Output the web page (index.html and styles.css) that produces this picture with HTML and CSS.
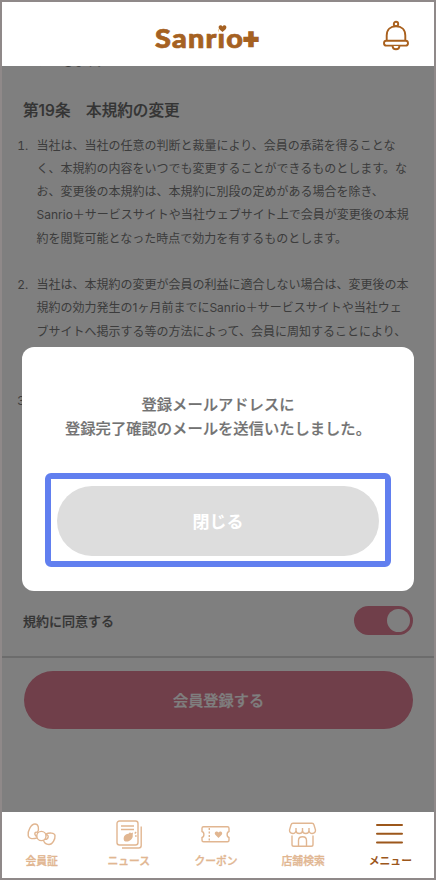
FILE: index.html
```html
<!DOCTYPE html>
<html lang="ja">
<head>
<meta charset="utf-8">
<title>Sanrio+</title>
<link rel="stylesheet" href="styles.css">
</head>
<body>
<div class="app">
  <header class="header">
    <div class="logo"><span class="logo-text">Sanrio</span><svg class="logo-heart" viewBox="0 0 9 9"><rect x=".5" width="8" height="9" fill="#fff"/><path d="M4.500 8C2.500 6.300 .6 5 .6 3.200C.6 .9 3.400 .5 4.500 2.500C5.600 .5 8.400 .9 8.400 3.200C8.400 5 6.500 6.300 4.500 8Z"/></svg><span class="logo-plus">+</span></div>
    <svg class="bell" viewBox="0 0 28 32"><circle cx="14" cy="4" r="2.200"/><path d="M4.700 21.500V15.500C4.700 9.500 8.500 6.200 14 6.200S23.300 9.500 23.300 15.500V21.500"/><rect x="2" y="20.800" width="24" height="4.800" rx="2.400"/><path d="M10.600 26C10.600 30.400 17.400 30.400 17.400 26"/></svg>
  </header>
  <main class="content">
    <div class="terms">
      <p class="previous">たとします。</p>
      <h2>第19条　本規約の変更</h2>
      <ol>
        <li><span>当社は、当社の任意の判断と裁量により、会員の承諾を得ることな</span><span>く、本規約の内容をいつでも変更することができるものとします。な</span><span>お、変更後の本規約は、本規約に別段の定めがある場合を除き、</span><span>Sanrio＋サービスサイトや当社ウェブサイト上で会員が変更後の本規</span><span>約を閲覧可能となった時点で効力を有するものとします。</span></li>
        <li><span>当社は、本規約の変更が会員の利益に適合しない場合は、変更後の本</span><span>規約の効力発生の1ヶ月前までにSanrio＋サービスサイトや当社ウェ</span><span>ブサイトへ掲示する等の方法によって、会員に周知することにより、</span></li>
        <li>&nbsp;</li>
      </ol>
    </div>
    <div class="agree"><span>規約に同意する</span><span class="toggle"><span class="knob"></span></span></div>
    <div class="submit-area"><button class="submit">会員登録する</button></div>
    <div class="overlay">
      <section class="dialog">
        <p>登録メールアドレスに<br>登録完了確認のメールを送信いたしました。</p>
        <div class="focus"><button class="close">閉じる</button></div>
      </section>
    </div>
  </main>
  <nav class="nav">
    <a><svg viewBox="0 0 32 30"><path d="M11.400 12.600C13.500 9 12.500 4 9 4C5 4 1.500 11 2.200 15.500C2.900 19.500 7.500 19 11.300 17.800M19.800 14.200C23 12.500 28.500 12.500 29 15.500C29.400 19 26.500 24.500 23 24.500C20 24.500 18 22.500 17.500 20.200"/><circle cx="15.400" cy="16" r="4.600"/><path d="M12 12.800C8.800 10.500 7.500 14.500 10.800 16.600M19.900 14.700C23.400 14.500 22.800 19.700 18.700 19.300"/></svg><span>会員証</span></a>
    <a><svg viewBox="0 0 32 30"><rect x="4" y="1" width="21" height="24" rx="2.500"/><path d="M28.200 6.500V25.500Q28.200 28 25.700 28H9M8 6H21M8 9.500H21"/><path class="solid" d="M11.300 21C9.500 17.500 12 13.500 15.500 13.700L17 12.300L18 13.300L20 12.500L19.700 15C20.500 19 15.500 23 11.300 21Z"/><path d="M21.700 13.500L23.200 12M22 16H23.700"/></svg><span>ニュース</span></a>
    <a><svg viewBox="0 0 32 30"><path d="M3.500 6.800H27.500Q29 6.800 29 8.300V11.500C26.500 12 26.500 17 29 17.500V20.300Q29 21.800 27.500 21.800H3.500Q2 21.800 2 20.300V17.500C4.500 17 4.500 12 2 11.500V8.300Q2 6.800 3.500 6.800Z"/><path class="dash" d="M9.300 8V21"/><path class="solid" d="M18.500 18L15.300 14.800C13.500 12.300 17 10.300 18.500 12.600C20 10.300 23.500 12.300 21.700 14.800Z"/></svg><span>クーポン</span></a>
    <a><svg viewBox="0 0 32 30"><path d="M6 3.300H25Q26.500 3.300 27 5L28.500 10C28.500 14.500 22 14.500 22 10.500C22 14.500 15.500 14.500 15.500 10.500C15.500 14.500 9 14.500 9 10.500C9 14.500 2.500 14.500 2.500 10L4 5Q4.500 3.300 6 3.300ZM9 8V11M15.500 8V11M22 8V11M5 15.500V24.500Q5 26.300 6.800 26.300H24.200Q26 26.300 26 24.500V15.500M11.500 26V20.500C11.500 15.500 19.500 15.500 19.500 20.500V26"/></svg><span>店舗検索</span></a>
    <a class="current"><svg viewBox="0 0 32 30"><path d="M3 5H28M3 13.800H28M3 22.600H28"/></svg><span>メニュー</span></a>
  </nav>
</div>
</body>
</html>
```

FILE: styles.css
```css
* { box-sizing: border-box; }
body {
  margin: 0;
  font-family: Inter, "Noto Sans CJK JP", sans-serif;
  text-spacing-trim: space-all;
}
button { border: 0; font-family: inherit; }
.app {
  width: 436px;
  height: 880px;
  border: 2px solid #8f8989;
  display: flex;
  flex-direction: column;
  background: #fff;
  overflow: hidden;
}
.header {
  height: 64px;
  flex: none;
  display: flex;
  align-items: center;
  justify-content: space-between;
  padding: 0 24px 0 152.500px;
}
.logo {
  position: relative;
  display: flex;
  align-items: center;
  height: 32px;
  margin-top: 7px;
  color: #a56122;
  font-family: Lato, sans-serif;
  font-weight: 900;
  font-size: 26px;
  line-height: 32px;
  -webkit-text-stroke: .7px #a56122;
}
.logo-text { letter-spacing: 1.100px; transform: scaleX(1.110); transform-origin: left; width: 89px; }
.logo-plus { font-size: 26px; -webkit-text-stroke-width: 2.600px; }
.logo-heart {
  position: absolute;
  left: 63.500px;
  top: 2px;
  width: 9px;
  height: 9px;
  fill: #a56122;
  stroke: none;
}
.bell {
  width: 28px;
  height: 32px;
  margin-top: 3px;
  fill: #fff;
  stroke: #a9601d;
  stroke-width: 1.900;
}
.content {
  position: relative;
  height: 746px;
  flex: none;
  overflow: hidden;
  display: flex;
  flex-direction: column;
}
.terms {
  height: 520px;
  flex: none;
  overflow: hidden;
  padding: 0 20px 0 21px;
  color: #787878;
}
.previous {
  margin: -16px 0 0 15px;
  font-size: 12px;
  line-height: 23px;
}
h2 {
  margin: 26px 0 11.500px;
  font-size: 15.600px;
  line-height: 23px;
  font-weight: 500;
  -webkit-text-stroke: .2px;
  color: #686868;
}
ol {
  margin: 0;
  padding-left: 13.500px;
  font-size: 12px;
  line-height: 23.250px;
}
li { margin-bottom: 23.250px; }
li:nth-child(2) { padding-bottom: 23.250px; }
li::marker { content: counter(list-item) ".\2002\200A\200A"; }
li span { display: block; white-space: nowrap; }
.agree {
  height: 72px;
  flex: none;
  display: flex;
  align-items: center;
  justify-content: space-between;
  padding: 0 21px 2px;
  border-bottom: 2px solid #d8d8d8;
  font-size: 13px;
  font-weight: 500;
  -webkit-text-stroke: .2px;
  color: #686868;
}
.toggle {
  width: 59px;
  height: 29px;
  padding: 3px;
  border-radius: 15px;
  background: #e07e94;
  display: flex;
  justify-content: flex-end;
}
.knob { width: 23px; height: 23px; border-radius: 50%; background: #fff; }
.submit-area { padding: 13px 21px 0 22px; }
.submit {
  display: block;
  width: 100%;
  height: 58px;
  padding-bottom: 3px;
  border-radius: 29px;
  background: #e07e94;
  color: #fff;
  font-size: 15.200px;
  font-weight: 500;
  -webkit-text-stroke: .25px;
}
.overlay {
  position: absolute;
  inset: 0;
  background: rgba(0, 0, 0, .5);
  padding: 281px 20px 0;
}
.dialog {
  height: 244px;
  border-radius: 12px;
  background: #fff;
  padding: 46px 23px 0;
  text-align: center;
}
.dialog p {
  margin: 0 0 33px;
  font-size: 15.300px;
  line-height: 23.500px;
  font-weight: 500;
  -webkit-text-stroke: .2px;
  color: #727272;
}
.focus {
  height: 94px;
  border: 6px solid #617fef;
  border-radius: 6px;
  padding: 7px 6px;
}
.close {
  display: block;
  width: 100%;
  height: 70px;
  border-radius: 35px;
  background: #ddd;
  color: #fff;
  font-size: 17px;
  font-weight: 700;
  padding-bottom: 3px;
}
.nav {
  height: 66px;
  flex: none;
  display: grid;
  grid-template-columns: repeat(5, 87.200px);
  margin-left: -4px;
  padding-top: 7.500px;
}
.nav a {
  display: flex;
  flex-direction: column;
  align-items: center;
  color: #e1b691;
  font-size: 10.800px;
  line-height: 16px;
  font-weight: 500;
  -webkit-text-stroke: .3px;
}
.nav svg {
  width: 32px;
  height: 30px;
  margin-bottom: 4px;
  fill: none;
  stroke: currentColor;
  stroke-width: 1.400;
}
.nav .solid { fill: currentColor; stroke: none; }
.nav .dash { stroke-dasharray: 2 1.500; }
.nav .current { color: #9c571b; font-weight: 700; -webkit-text-stroke: 0; }
.nav .current svg { stroke-width: 2; stroke-linecap: round; }
```
